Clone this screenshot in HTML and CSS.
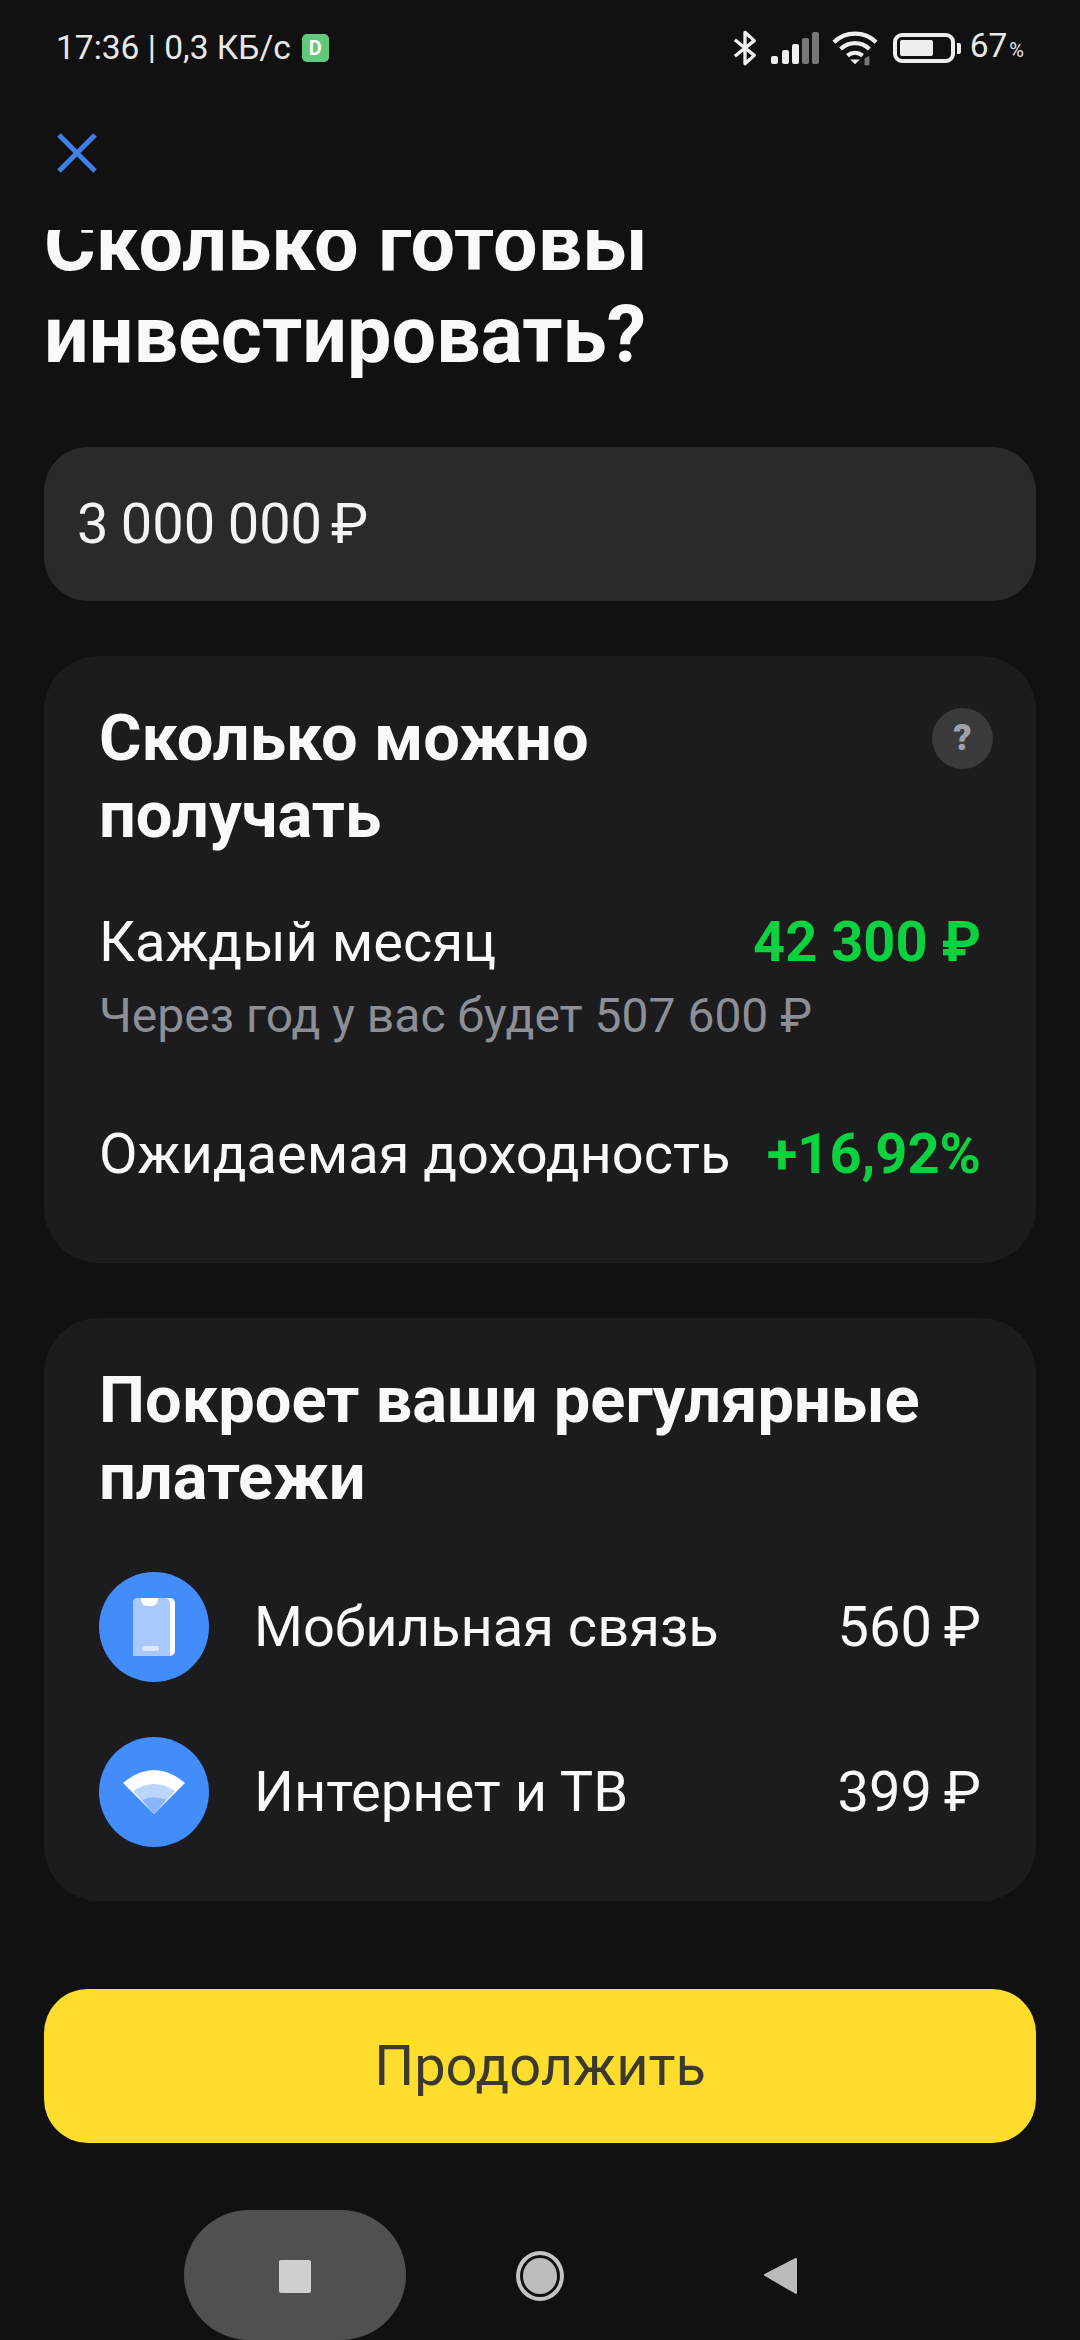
FILE: index.html
```html
<!DOCTYPE html>
<html lang="ru">
<head>
    <meta charset="UTF-8">
    <title>Сколько готовы инвестировать?</title>
    <link rel="stylesheet" href="styles.css">
</head>
<body>
    <div class="status-bar">
        <div class="status-left">
            <span>17:36 | 0,3 КБ/с</span>
            <span class="app-badge">D</span>
        </div>
        <div class="status-right">
            <svg width="24" height="40" viewBox="0 0 26 40" fill="none" stroke="#eee" stroke-width="3.6" stroke-linejoin="round"><path d="M2 11 L23 28 L13 37 V3 L23 12 L2 29"/></svg>
            <svg class="signal" width="48" height="32" viewBox="0 0 48 32"><rect x="0" y="24" width="7" height="8" rx="2" fill="#eee"/><rect x="11" y="18" width="7" height="14" rx="2" fill="#eee"/><rect x="21" y="12" width="7" height="20" rx="2" fill="#eee"/><rect x="31" y="6" width="7" height="26" rx="2" fill="#777"/><rect x="41" y="0" width="7" height="32" rx="2" fill="#777"/></svg>
            <svg class="wifi" width="46" height="36" viewBox="0 0 48 36" fill="none" stroke="#eee" stroke-width="4.4"><path d="M2 12 C14 0 34 0 46 12"/><path d="M9 19 C18 11 30 11 39 19"/><path d="M16 26 C21 22 27 22 32 26"/><path d="M24 35 L19 30 H29 Z" fill="#eee" stroke="none"/><path d="M34 36 V29 L39 26 V36 Z" fill="#777" stroke="none"/></svg>
            <div class="battery"><div class="battery-level"></div></div>
            <div class="battery-cap"></div>
            <span class="battery-text">67<small>%</small></span>
        </div>
    </div>

    <div class="close-row">
        <svg width="40" height="40" viewBox="0 0 40 40" stroke="#3f7fe8" stroke-width="5"><path d="M2 2 L38 38 M38 2 L2 38"/></svg>
    </div>

    <div class="title-clip">
        <h1 class="title">Сколько готовы<br>инвестировать?</h1>
    </div>

    <div class="amount-field">3 000 000<span class="rub">₽</span></div>

    <section class="card income-card">
        <div class="card-head">
            <h2>Сколько можно<br>получать</h2>
            <span class="help">?</span>
        </div>
        <div class="line line-month">
            <span>Каждый месяц</span>
            <strong>42 300 ₽</strong>
        </div>
        <div class="note">Через год у вас будет 507 600 ₽</div>
        <div class="line line-yield">
            <span>Ожидаемая доходность</span>
            <strong>+16,92%</strong>
        </div>
    </section>

    <section class="card bills-card">
        <h2>Покроет ваши регулярные<br>платежи</h2>
        <div class="bill bill-first">
            <span class="bill-icon">
                <svg width="42" height="58" viewBox="0 0 42 58"><rect x="0" y="0" width="42" height="58" rx="5" fill="#fff"/><path d="M0 5 a5 5 0 0 1 5 -5 H32 a5 5 0 0 1 5 5 V58 H0 Z" fill="#a9c8fc"/><path d="M8 0 H25 C25 6 22 8 19 8 H14 C11 8 8 6 8 0 Z" fill="#fff"/><rect x="9" y="48" width="17" height="5" rx="2.5" fill="#dbe8fe"/></svg>
            </span>
            <span class="bill-name">Мобильная связь</span>
            <span class="bill-sum">560 ₽</span>
        </div>
        <div class="bill">
            <span class="bill-icon">
                <svg class="bill-wifi" width="62" height="44" viewBox="0 0 62 44"><path d="M0 13 Q31 -13 62 13 L31 44 Z" fill="#fff"/><path d="M10 21 Q31 7 52 21 L31 44 Z" fill="#bcd5fd"/><path d="M19 30 Q31 24.6 43 30 L31 44 Z" fill="#8ab4fb"/></svg>
            </span>
            <span class="bill-name">Интернет и ТВ</span>
            <span class="bill-sum">399 ₽</span>
        </div>
    </section>

    <button class="continue">Продолжить</button>

    <div class="nav-bar">
        <div class="nav-pill"><div class="nav-square"></div></div>
        <div class="nav-home"><div class="nav-home-dot"></div></div>
        <svg class="nav-back" width="36" height="38" viewBox="0 0 36 38"><path d="M33 2 V36 L2 18 Z" fill="#bbb" stroke="#bbb" stroke-width="2" stroke-linejoin="round"/></svg>
    </div>
</body>
</html>
```

FILE: styles.css
```css
* {
    box-sizing: border-box;
}

html, body {
    margin: 0;
    height: 2340px;
    overflow: hidden;
}

body {
    background: #111112;
    color: #f8f9fa;
    font-family: Roboto, "Noto Sans", sans-serif;
    display: flex;
    flex-direction: column;
}

/* status bar */
.status-bar {
    height: 96px;
    padding: 26px 56px 0 56px;
    display: flex;
    justify-content: space-between;
    align-items: flex-start;
    color: #e8e8e8;
    font-size: 33.5px;
    line-height: 44px;
}

.status-left {
    display: flex;
    align-items: center;
    gap: 11px;
}

.app-badge {
    width: 27px;
    height: 28px;
    border-radius: 5px;
    background: #62c97c;
    color: #fff;
    font-size: 20px;
    font-weight: 700;
    line-height: 28px;
    text-align: center;
}

.status-right {
    display: flex;
    align-items: center;
    height: 44px;
}

.signal {
    margin-left: 14px;
}

.wifi {
    margin-left: 13px;
}

.battery {
    width: 62px;
    height: 30px;
    margin-left: 15px;
    border: 4px solid #eee;
    border-radius: 9px;
    padding: 3px;
}

.battery-level {
    width: 33px;
    height: 16px;
    background: #eee;
    border-radius: 2px;
}

.battery-cap {
    width: 4px;
    height: 11px;
    margin-left: 2px;
    background: #eee;
    border-radius: 0 2px 2px 0;
}

.battery-text {
    margin-left: 9px;
}

.battery-text small {
    font-size: 20px;
    margin-left: 2px;
}

/* close */
.close-row {
    height: 134px;
    padding: 37px 0 0 57px;
}

.close-row svg {
    display: block;
}

/* title scrolled under the toolbar */
.title-clip {
    height: 149px;
    margin-bottom: 68px;
    overflow: hidden;
    padding-left: 44px;
}

.title {
    margin: -33px 0 0;
    font-size: 79px;
    line-height: 92px;
    font-weight: 700;
}

.amount-field {
    height: 154px;
    margin: 0 44px 55px;
    padding-left: 33px;
    border-radius: 44px;
    background: #2a2a2b;
    font-size: 56px;
    line-height: 154px;
    color: #f3f3f3;
    word-spacing: -1.5px;
}

.rub {
    margin-left: 9px;
}

.card {
    margin: 0 44px;
    border-radius: 55px;
    background: #1c1c1e;
    padding: 44px 55px 0;
}

h2 {
    margin: 0;
    font-size: 65px;
    line-height: 77px;
    font-weight: 700;
}

.income-card {
    height: 607px;
    margin-bottom: 55px;
}

.card-head {
    position: relative;
}

.help {
    position: absolute;
    right: -12px;
    top: 8px;
    width: 61px;
    height: 61px;
    border-radius: 50%;
    background: #3a3a3d;
    color: #9fa2a8;
    font-size: 36px;
    font-weight: 900;
    line-height: 61px;
    text-align: center;
}

.line {
    display: flex;
    justify-content: space-between;
    align-items: baseline;
    font-size: 56px;
    line-height: 70px;
}

.line strong {
    color: #0dd23f;
    font-weight: 700;
}

.line-month {
    margin-top: 53px;
}

.note {
    margin-top: 9px;
    font-size: 48px;
    line-height: 60px;
    color: #8c8f96;
}

.line-yield {
    margin-top: 73px;
}

.bills-card {
    height: 583px;
    margin-bottom: 88px;
}

.bill {
    display: flex;
    align-items: center;
    height: 110px;
    margin-top: 55px;
    font-size: 56px;
}

.bill-first {
    margin-top: 56px;
}

.bill-icon {
    width: 110px;
    height: 110px;
    flex: none;
    margin-right: 45px;
    border-radius: 50%;
    background: #438dfa;
    display: flex;
    align-items: center;
    justify-content: center;
}

.bill-name {
    flex: 1;
}

.bill-sum {
    word-spacing: -2px;
}

.continue {
    display: block;
    width: 992px;
    height: 154px;
    margin: 0 44px 67px;
    border: 0;
    border-radius: 44px;
    background: #ffdd2d;
    color: #3b3a2c;
    font-family: inherit;
    font-size: 56px;
}

/* system navigation */
.nav-bar {
    height: 130px;
    position: relative;
}

.nav-pill {
    position: absolute;
    left: 184px;
    top: 0;
    width: 222px;
    height: 130px;
    border-radius: 65px / 65px;
    background: #505050;
    display: flex;
    align-items: center;
    justify-content: center;
}

.nav-square {
    width: 32px;
    height: 33px;
    border-radius: 2px;
    background: #cfcfcf;
    margin-top: 2px;
}

.nav-home {
    position: absolute;
    left: 516px;
    top: 41px;
    width: 48px;
    height: 50px;
    border: 4px solid #c4c4c4;
    border-radius: 50%;
    padding: 3px;
}

.nav-home-dot {
    width: 100%;
    height: 100%;
    border-radius: 50%;
    background: #bdbdbd;
}

.nav-back {
    position: absolute;
    left: 763px;
    top: 47px;
}
```
